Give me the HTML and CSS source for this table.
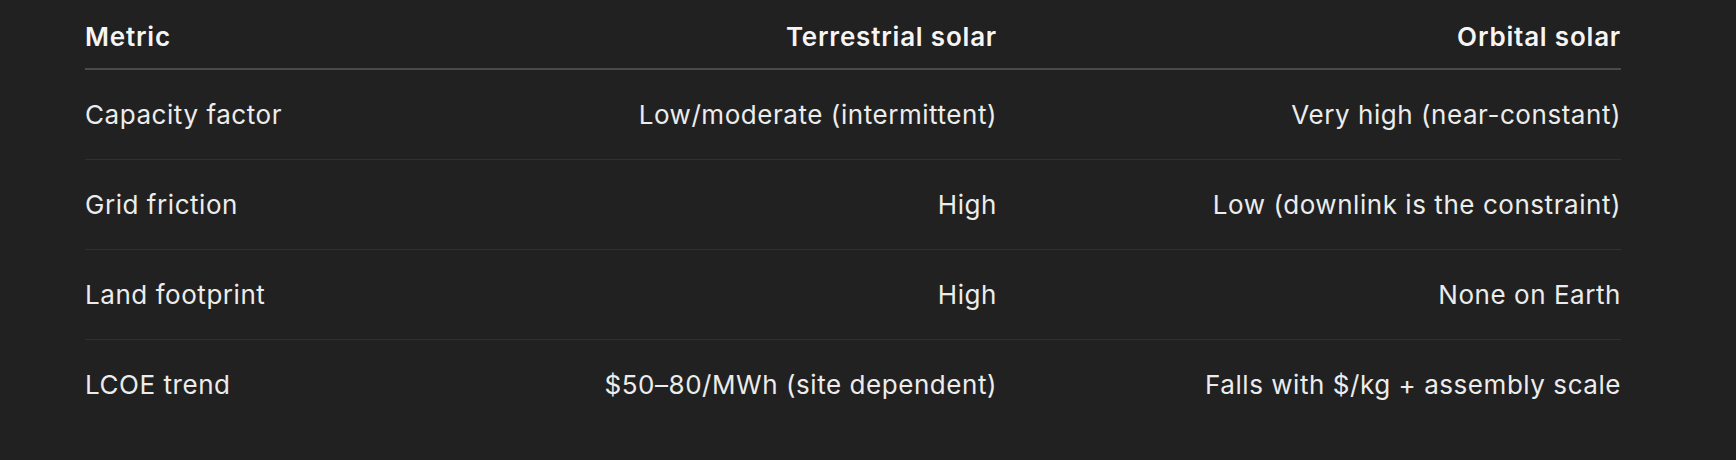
FILE: index.html
```html
<!DOCTYPE html>
<html lang="en">
<head>
<meta charset="utf-8">
<title>Solar comparison</title>
<link rel="stylesheet" href="styles.css">
</head>
<body>
<div class="wrap">
  <table class="cmp">
    <colgroup>
      <col class="c1"><col class="c2"><col class="c3">
    </colgroup>
    <thead>
      <tr>
        <th class="left">Metric</th>
        <th class="right">Terrestrial solar</th>
        <th class="right">Orbital solar</th>
      </tr>
    </thead>
    <tbody>
      <tr>
        <td class="left">Capacity factor</td>
        <td class="right">Low/moderate (intermittent)</td>
        <td class="right">Very high (near-constant)</td>
      </tr>
      <tr>
        <td class="left">Grid friction</td>
        <td class="right">High</td>
        <td class="right">Low (downlink is the constraint)</td>
      </tr>
      <tr>
        <td class="left">Land footprint</td>
        <td class="right">High</td>
        <td class="right">None on Earth</td>
      </tr>
      <tr>
        <td class="left">LCOE trend</td>
        <td class="right">$50–80/MWh (site dependent)</td>
        <td class="right">Falls with $/kg + assembly scale</td>
      </tr>
    </tbody>
  </table>
</div>
</body>
</html>
```
FILE: styles.css
```css
html, body {
  margin: 0;
  padding: 0;
  background: #212121;
}
body {
  font-family: Inter, "Noto Sans", "Liberation Sans", sans-serif;
  color: #ececec;
  font-size: 26px;
}
.wrap {
  padding-left: 85px;
  width: 1536px;
}
.cmp {
  width: 1536px;
  border-collapse: collapse;
  table-layout: fixed;
}
.c1 { width: 440px; }
.c2 { width: 472px; }
.c3 { width: 624px; }
.cmp th {
  font-weight: 600;
  color: #f5f5f5;
  letter-spacing: 0.8px;
  line-height: 37px;
  padding: 18px 0 13px;
  border-bottom: 2px solid #4a4a4a;
  white-space: nowrap;
}
.cmp td {
  font-weight: 400;
  letter-spacing: 0.55px;
  line-height: 37px;
  padding: 26px 0;
  border-bottom: 1px solid #303030;
  white-space: nowrap;
}
.cmp tbody tr:last-child td {
  border-bottom: none;
}
.left { text-align: left; }
.right { text-align: right; }
```
